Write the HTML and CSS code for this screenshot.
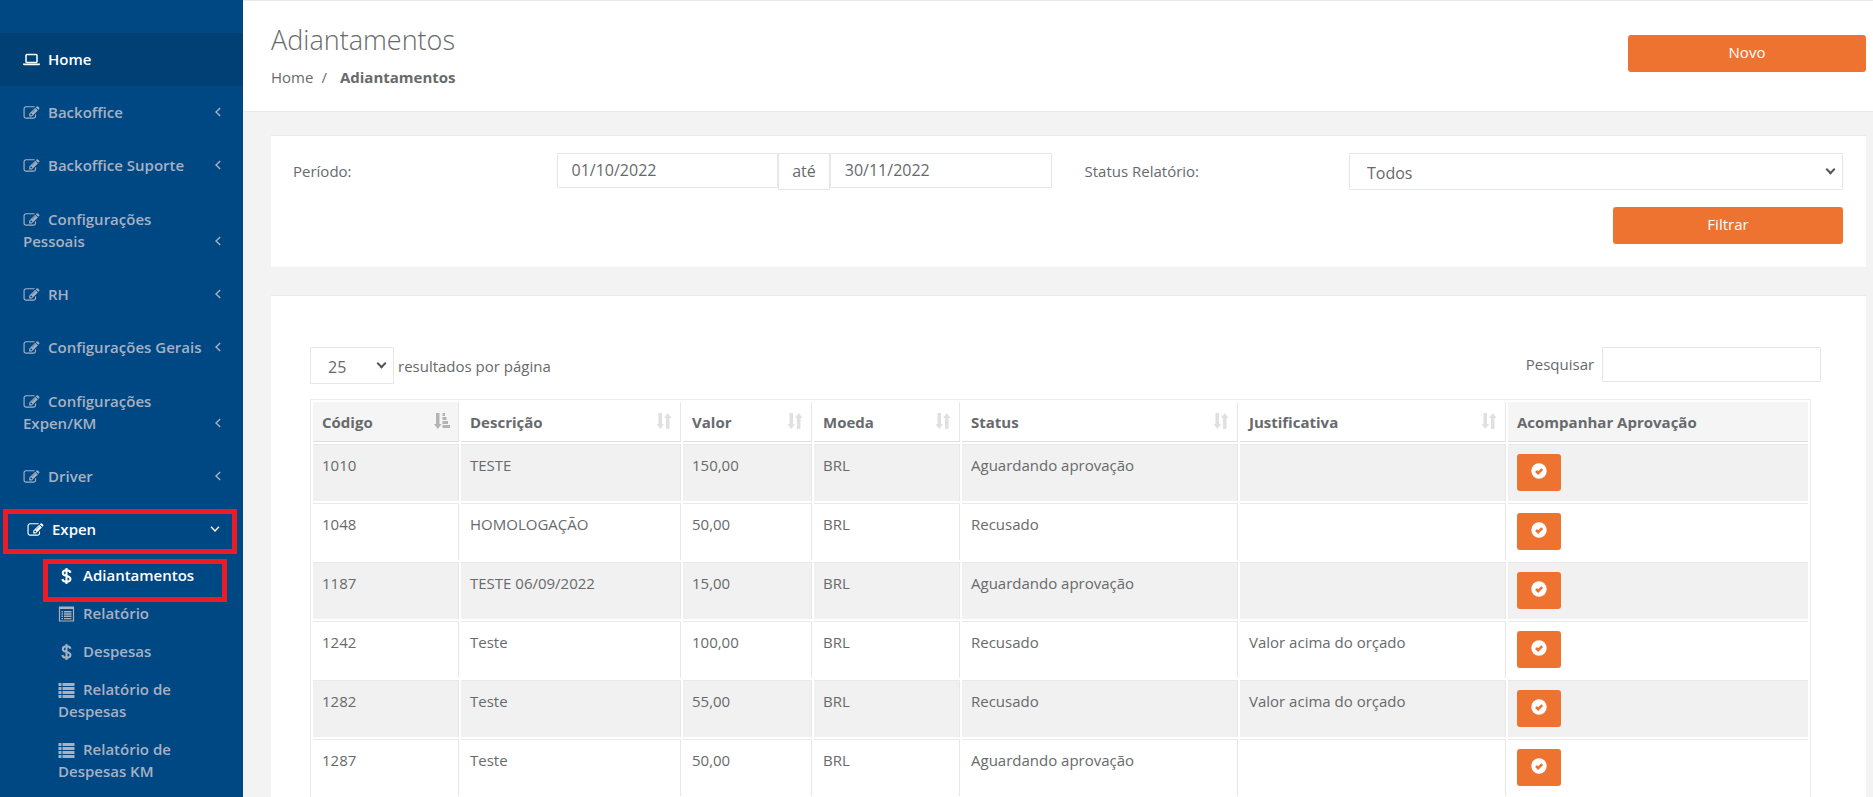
FILE: index.html
```html
<!DOCTYPE html>
<html lang="pt-br">

<head>
  <meta charset="UTF-8">
  <meta name="viewport" content="width=device-width, initial-scale=1">
  <title>Adiantamentos</title>
  <link rel="stylesheet" href="styles.css">
</head>

<body>

  <!-- Ícones -->
  <svg class="sprite" aria-hidden="true">
    <symbol id="i-laptop" viewBox="0 0 17 14">
      <path d="M3 2.5q0-1 1-1h9q1 0 1 1v6q0 1-1 1H4q-1 0-1-1z" fill="none" stroke="currentColor" stroke-width="1.500"/>
      <path d="M0 10.5h17v.8q0 1-1.5 1h-14q-1.500 0-1.500-1z" fill="currentColor"/>
    </symbol>
    <symbol id="i-edit" viewBox="0 0 1792 1792">
      <path fill="currentColor" d="M888 1184l116-116-152-152-116 116v56h96v96h56zm440-720q-16-16-33 1l-350 350q-17 17-1 33t33-1l350-350q17-17 1-33zm80 594v190q0 119-84.500 203.500t-203.500 84.500h-832q-119 0-203.500-84.500t-84.500-203.500v-832q0-119 84.500-203.500t203.500-84.500h832q63 0 117 25 15 7 18 23 3 17-9 29l-49 49q-14 14-32 8-23-6-45-6h-832q-66 0-113 47t-47 113v832q0 66 47 113t113 47h832q66 0 113-47t47-113v-126q0-13 9-22l64-64q15-15 35-7t20 29zm-96-738l288 288-672 672h-288v-288zm444 132l-92 92-288-288 92-92q28-28 68-28t68 28l152 152q28 28 28 68t-28 68z"/>
    </symbol>
    <symbol id="i-angle" viewBox="0 0 8 12">
      <path d="M6.200 2L2 6l4.200 4" fill="none" stroke="currentColor" stroke-width="1.400"/>
    </symbol>
    <symbol id="i-usd" viewBox="0 0 16 16">
      <path d="M8 0v16M12 4.800Q11.500 2.300 8 2.300 4.300 2.300 4.300 5q0 2.200 3.700 3t4 3q0 2.700-4 2.700-3.700 0-4.200-2.700" fill="none" stroke="currentColor" stroke-width="2"/>
    </symbol>
    <symbol id="i-list-alt" viewBox="0 0 16 16">
      <path d="M1 1h14v14H1z" fill="none" stroke="currentColor" stroke-width="1.200"/>
      <path d="M1 1h14v2H1zM3 5h1.500v1.400H3zM5.500 5H13v1.400H5.500zM3 7.300h1.500v1.400H3zM5.500 7.300H13v1.400H5.500zM3 9.600h1.500V11H3zM5.500 9.600H13V11H5.500zM3 11.900h1.500v1.400H3zM5.500 11.900H13v1.400H5.500z" fill="currentColor"/>
    </symbol>
    <symbol id="i-list" viewBox="0 0 16 16">
      <path d="M0 1h3v3H0zM4 1h12v3H4zM0 5h3v3H0zM4 5h12v3H4zM0 9h3v3H0zM4 9h12v3H4zM0 13h3v3H0zM4 13h12v3H4z" fill="currentColor"/>
    </symbol>
    <symbol id="i-sort" viewBox="0 0 16 16">
      <path d="M2.500 0h3.500v11h2l-3.700 5L.500 11h2zM10 16h3.500V5h2l-3.700-5L8 5h2z" fill="currentColor"/>
    </symbol>
    <symbol id="i-sort-asc" viewBox="0 0 16 16">
      <path d="M2 0h3.500v11h2L3.800 16 0 11h2zM8.500 0H11v3H8.500zM8.500 4H12.500v3H8.500zM8.500 8H14v3H8.500zM8.500 12H16v3H8.500z" fill="currentColor"/>
    </symbol>
    <symbol id="i-ok" viewBox="0 0 16 16">
      <circle cx="8" cy="8" r="7.700" fill="currentColor"/>
      <path d="M5 8l2.200 2.200 4-4" fill="none" stroke="#ee7330" stroke-width="2.600"/>
    </symbol>
  </svg>

  <div class="wrapper">

    <nav class="sidebar">
      <ul class="menu">
        <li class="home"><a href="#"><svg class="icon"><use href="#i-laptop"/></svg>Home</a></li>
        <li><a href="#"><svg class="icon"><use href="#i-edit"/></svg>Backoffice<svg class="arrow"><use href="#i-angle"/></svg></a></li>
        <li><a href="#"><svg class="icon"><use href="#i-edit"/></svg>Backoffice Suporte<svg class="arrow"><use href="#i-angle"/></svg></a></li>
        <li class="double"><a href="#"><svg class="icon"><use href="#i-edit"/></svg>Configurações<br>Pessoais<svg class="arrow"><use href="#i-angle"/></svg></a></li>
        <li><a href="#"><svg class="icon"><use href="#i-edit"/></svg>RH<svg class="arrow"><use href="#i-angle"/></svg></a></li>
        <li><a href="#"><svg class="icon"><use href="#i-edit"/></svg>Configurações Gerais<svg class="arrow"><use href="#i-angle"/></svg></a></li>
        <li class="double"><a href="#"><svg class="icon"><use href="#i-edit"/></svg>Configurações<br>Expen/KM<svg class="arrow"><use href="#i-angle"/></svg></a></li>
        <li><a href="#"><svg class="icon"><use href="#i-edit"/></svg>Driver<svg class="arrow"><use href="#i-angle"/></svg></a></li>
        <li class="active">
          <a href="#" class="marked"><svg class="icon"><use href="#i-edit"/></svg>Expen<svg class="arrow open"><use href="#i-angle"/></svg></a>
          <ul class="submenu">
            <li class="current"><a href="#" class="marked"><svg class="icon"><use href="#i-usd"/></svg>Adiantamentos</a></li>
            <li><a href="#"><svg class="icon"><use href="#i-list-alt"/></svg>Relatório</a></li>
            <li><a href="#"><svg class="icon"><use href="#i-usd"/></svg>Despesas</a></li>
            <li><a href="#"><svg class="icon"><use href="#i-list"/></svg>Relatório de<br>Despesas</a></li>
            <li><a href="#"><svg class="icon"><use href="#i-list"/></svg>Relatório de<br>Despesas KM</a></li>
          </ul>
        </li>
      </ul>
    </nav>

    <main class="page">

      <header class="heading">
        <div>
          <h1>Adiantamentos</h1>
          <ol class="breadcrumb">
            <li><a href="#">Home</a></li>
            <li><strong>Adiantamentos</strong></li>
          </ol>
        </div>
        <button type="button" class="btn btn-new">Novo</button>
      </header>

      <form class="box filter">
        <div class="filter-row">
          <label for="inicio" class="period-label">Período:</label>
          <div class="range">
            <input type="text" id="inicio" value="01/10/2022">
            <label for="fim" class="addon">até</label>
            <input type="text" id="fim" value="30/11/2022">
          </div>
          <label for="status" class="status-label">Status Relatório:</label>
          <div class="select status">
            <select id="status">
              <option>Todos</option>
            </select>
          </div>
        </div>
        <button type="button" class="btn btn-filter">Filtrar</button>
      </form>

      <section class="box results">
        <div class="tools">
          <label class="length">
            <span class="select">
              <select>
                <option>25</option>
                <option>50</option>
                <option>100</option>
              </select>
            </span>
            resultados por página
          </label>
          <label class="search">Pesquisar <input type="search"></label>
        </div>

        <table>
          <colgroup>
            <col class="c-codigo">
            <col class="c-descricao">
            <col class="c-valor">
            <col class="c-moeda">
            <col class="c-status">
            <col class="c-justificativa">
            <col>
          </colgroup>
          <thead>
            <tr>
              <th class="sorted"><div>Código<svg class="sort"><use href="#i-sort-asc"/></svg></div></th>
              <th><div>Descrição<svg class="sort"><use href="#i-sort"/></svg></div></th>
              <th><div>Valor<svg class="sort"><use href="#i-sort"/></svg></div></th>
              <th><div>Moeda<svg class="sort"><use href="#i-sort"/></svg></div></th>
              <th><div>Status<svg class="sort"><use href="#i-sort"/></svg></div></th>
              <th><div>Justificativa<svg class="sort"><use href="#i-sort"/></svg></div></th>
              <th class="fixed">Acompanhar Aprovação</th>
            </tr>
          </thead>
          <tbody>
            <tr>
              <td>1010</td><td>TESTE</td><td>150,00</td><td>BRL</td><td>Aguardando aprovação</td><td></td>
              <td><button type="button" class="btn btn-ok" aria-label="Acompanhar"><svg><use href="#i-ok"/></svg></button></td>
            </tr>
            <tr>
              <td>1048</td><td>HOMOLOGAÇÃO</td><td>50,00</td><td>BRL</td><td>Recusado</td><td></td>
              <td><button type="button" class="btn btn-ok" aria-label="Acompanhar"><svg><use href="#i-ok"/></svg></button></td>
            </tr>
            <tr>
              <td>1187</td><td>TESTE 06/09/2022</td><td>15,00</td><td>BRL</td><td>Aguardando aprovação</td><td></td>
              <td><button type="button" class="btn btn-ok" aria-label="Acompanhar"><svg><use href="#i-ok"/></svg></button></td>
            </tr>
            <tr>
              <td>1242</td><td>Teste</td><td>100,00</td><td>BRL</td><td>Recusado</td><td>Valor acima do orçado</td>
              <td><button type="button" class="btn btn-ok" aria-label="Acompanhar"><svg><use href="#i-ok"/></svg></button></td>
            </tr>
            <tr>
              <td>1282</td><td>Teste</td><td>55,00</td><td>BRL</td><td>Recusado</td><td>Valor acima do orçado</td>
              <td><button type="button" class="btn btn-ok" aria-label="Acompanhar"><svg><use href="#i-ok"/></svg></button></td>
            </tr>
            <tr>
              <td>1287</td><td>Teste</td><td>50,00</td><td>BRL</td><td>Aguardando aprovação</td><td></td>
              <td><button type="button" class="btn btn-ok" aria-label="Acompanhar"><svg><use href="#i-ok"/></svg></button></td>
            </tr>
          </tbody>
        </table>
      </section>

    </main>
  </div>

</body>
</html>
```
FILE: styles.css
```css
* {
  box-sizing: border-box;
}
body {
  margin: 0;
  height: 100vh;
  overflow: hidden;
  font-family: "Open Sans", "Liberation Sans", sans-serif;
  font-size: 15px;
  line-height: 22px;
  color: #676a6c;
  background: #f3f3f3;
}
a {
  color: inherit;
  text-decoration: none;
}
ul,
ol {
  list-style: none;
  margin: 0;
  padding: 0;
}
.sprite {
  display: none;
}
.wrapper {
  display: flex;
  height: 100%;
}

/* Menu lateral */
.sidebar {
  flex: 0 0 243px;
  padding-top: 33px;
  overflow: hidden;
  background: #004884;
  color: #a7b1c2;
  font-weight: 600;
}
.menu a {
  position: relative;
  display: block;
  padding: 15px 23px 16px;
}
.menu .double > a {
  padding-top: 16px;
}
.menu .home {
  background: #004074;
  color: #fff;
}
.menu .active {
  padding-left: 4px;
}
.menu .active > a,
.menu .current > a {
  color: #fff;
}
.menu .submenu a {
  padding: 8px 20px 8px 54px;
}
.icon {
  width: 17px;
  height: 16px;
  margin-right: 8px;
  vertical-align: -3px;
}
.arrow {
  position: absolute;
  right: 21px;
  bottom: 21px;
  width: 8px;
  height: 12px;
}
.arrow.open {
  right: 24px;
  transform: rotate(-90deg);
}
/* Destaque vermelho do item selecionado */
.marked::after {
  content: "";
  position: absolute;
  inset: 6px 6px 2px -1px;
  border: 5px solid #ed1c24;
}
.submenu .marked::after {
  inset: 3px 16px -8px 39px;
}

/* Conteúdo */
.page {
  flex: 1;
  min-width: 0;
}
.heading {
  display: flex;
  justify-content: space-between;
  align-items: flex-start;
  padding: 22px 7px 23px 28px;
  background: #fff;
  border-top: 1px solid #e7eaec;
  border-bottom: 1px solid #e7eaec;
}
h1 {
  margin: 0 0 10px;
  font-size: 27px;
  font-weight: 300;
  line-height: 33px;
}
.breadcrumb {
  display: flex;
}
.breadcrumb li + li::before {
  content: "/";
  padding: 0 13px 0 8px;
}
.btn {
  height: 37px;
  padding: 0 0 3px;
  border: 0;
  border-radius: 3px;
  background: #ee7330;
  color: #fff;
  font: inherit;
  cursor: pointer;
}
.btn-new {
  width: 238px;
  margin-top: 12px;
}
.box {
  margin: 0 7px 28px 28px;
  background: #fff;
  border-top: 1px solid #e7eaec;
}

/* Filtro */
.filter {
  display: flex;
  flex-direction: column;
  margin-top: 23px;
  padding: 17px 23px 23px 22px;
}
.filter-row {
  display: flex;
  align-items: flex-start;
}
.filter-row > label {
  padding-top: 7px;
}
.period-label {
  flex: 0 0 17%;
}
.range {
  display: flex;
  align-items: flex-start;
  flex: 0 0 calc(32% - 1px);
}
.filter-row .status-label {
  flex: 1;
  padding-left: 33px;
}
.status {
  flex: 0 0 calc(32% - 2px);
}
input,
select {
  border: 1px solid #e5e6e7;
  border-radius: 1px;
  background: #fff;
  color: inherit;
  font: inherit;
  font-size: 16px;
}
input {
  height: 35px;
  padding: 0 14px 2px;
}
.range input {
  flex: 1;
  width: 0;
}
.addon {
  height: 37px;
  padding: 6px 13px;
  border: 1px solid #e5e6e7;
  font-size: 16px;
}
.btn-filter {
  align-self: flex-end;
  width: 230px;
  margin-top: 17px;
}
.select {
  position: relative;
  display: inline-block;
}
.select select {
  appearance: none;
  display: block;
  width: 100%;
  height: 37px;
  padding: 2px 17px 0;
}
.select::after {
  content: "";
  position: absolute;
  top: 13px;
  right: 9px;
  width: 5px;
  height: 5px;
  border: solid #555;
  border-width: 0 2px 2px 0;
  transform: rotate(45deg);
  pointer-events: none;
}

/* Resultados */
.results {
  margin-bottom: 0;
  padding: 51px 45px 40px 39px;
}
.tools {
  display: flex;
  justify-content: space-between;
  align-items: flex-start;
  margin-bottom: 15px;
}
.length {
  display: flex;
  align-items: center;
  gap: 4px;
}
.length .select {
  width: 84px;
}
.search input {
  width: 219px;
  margin-left: 4px;
}
table {
  width: calc(100% - 10px);
  table-layout: fixed;
  border: 1px solid #ebebeb;
  border-collapse: separate;
  border-spacing: 2px;
}
.c-codigo { width: 146px; }
.c-descricao { width: 220px; }
.c-valor { width: 129px; }
.c-moeda { width: 146px; }
.c-status { width: 276px; }
.c-justificativa { width: 266px; }
th,
td {
  text-align: left;
  vertical-align: top;
  border-right: 1px solid #e7e7e7;
}
th:last-child,
td:last-child {
  border-right: 0;
}
th {
  height: 40px;
  padding: 9px 8px 8px 9px;
  border-bottom: 1px solid #ddd;
  font-weight: 700;
}
th div {
  display: flex;
  justify-content: space-between;
}
th.sorted,
th.fixed {
  background: #f5f5f6;
}
td {
  height: 57px;
  padding: 9px;
  border-top: 1px solid #e7eaec;
}
tbody tr:nth-child(odd) td {
  background: #f1f1f1;
}
.sort {
  width: 16px;
  height: 16px;
  margin-top: 2px;
  color: #e0e0e0;
}
.sorted .sort {
  color: #b3b3b4;
}
.btn-ok {
  display: block;
  width: 44px;
}
.btn-ok svg {
  display: block;
  width: 16px;
  height: 16px;
  margin: 0 auto;
}
```
